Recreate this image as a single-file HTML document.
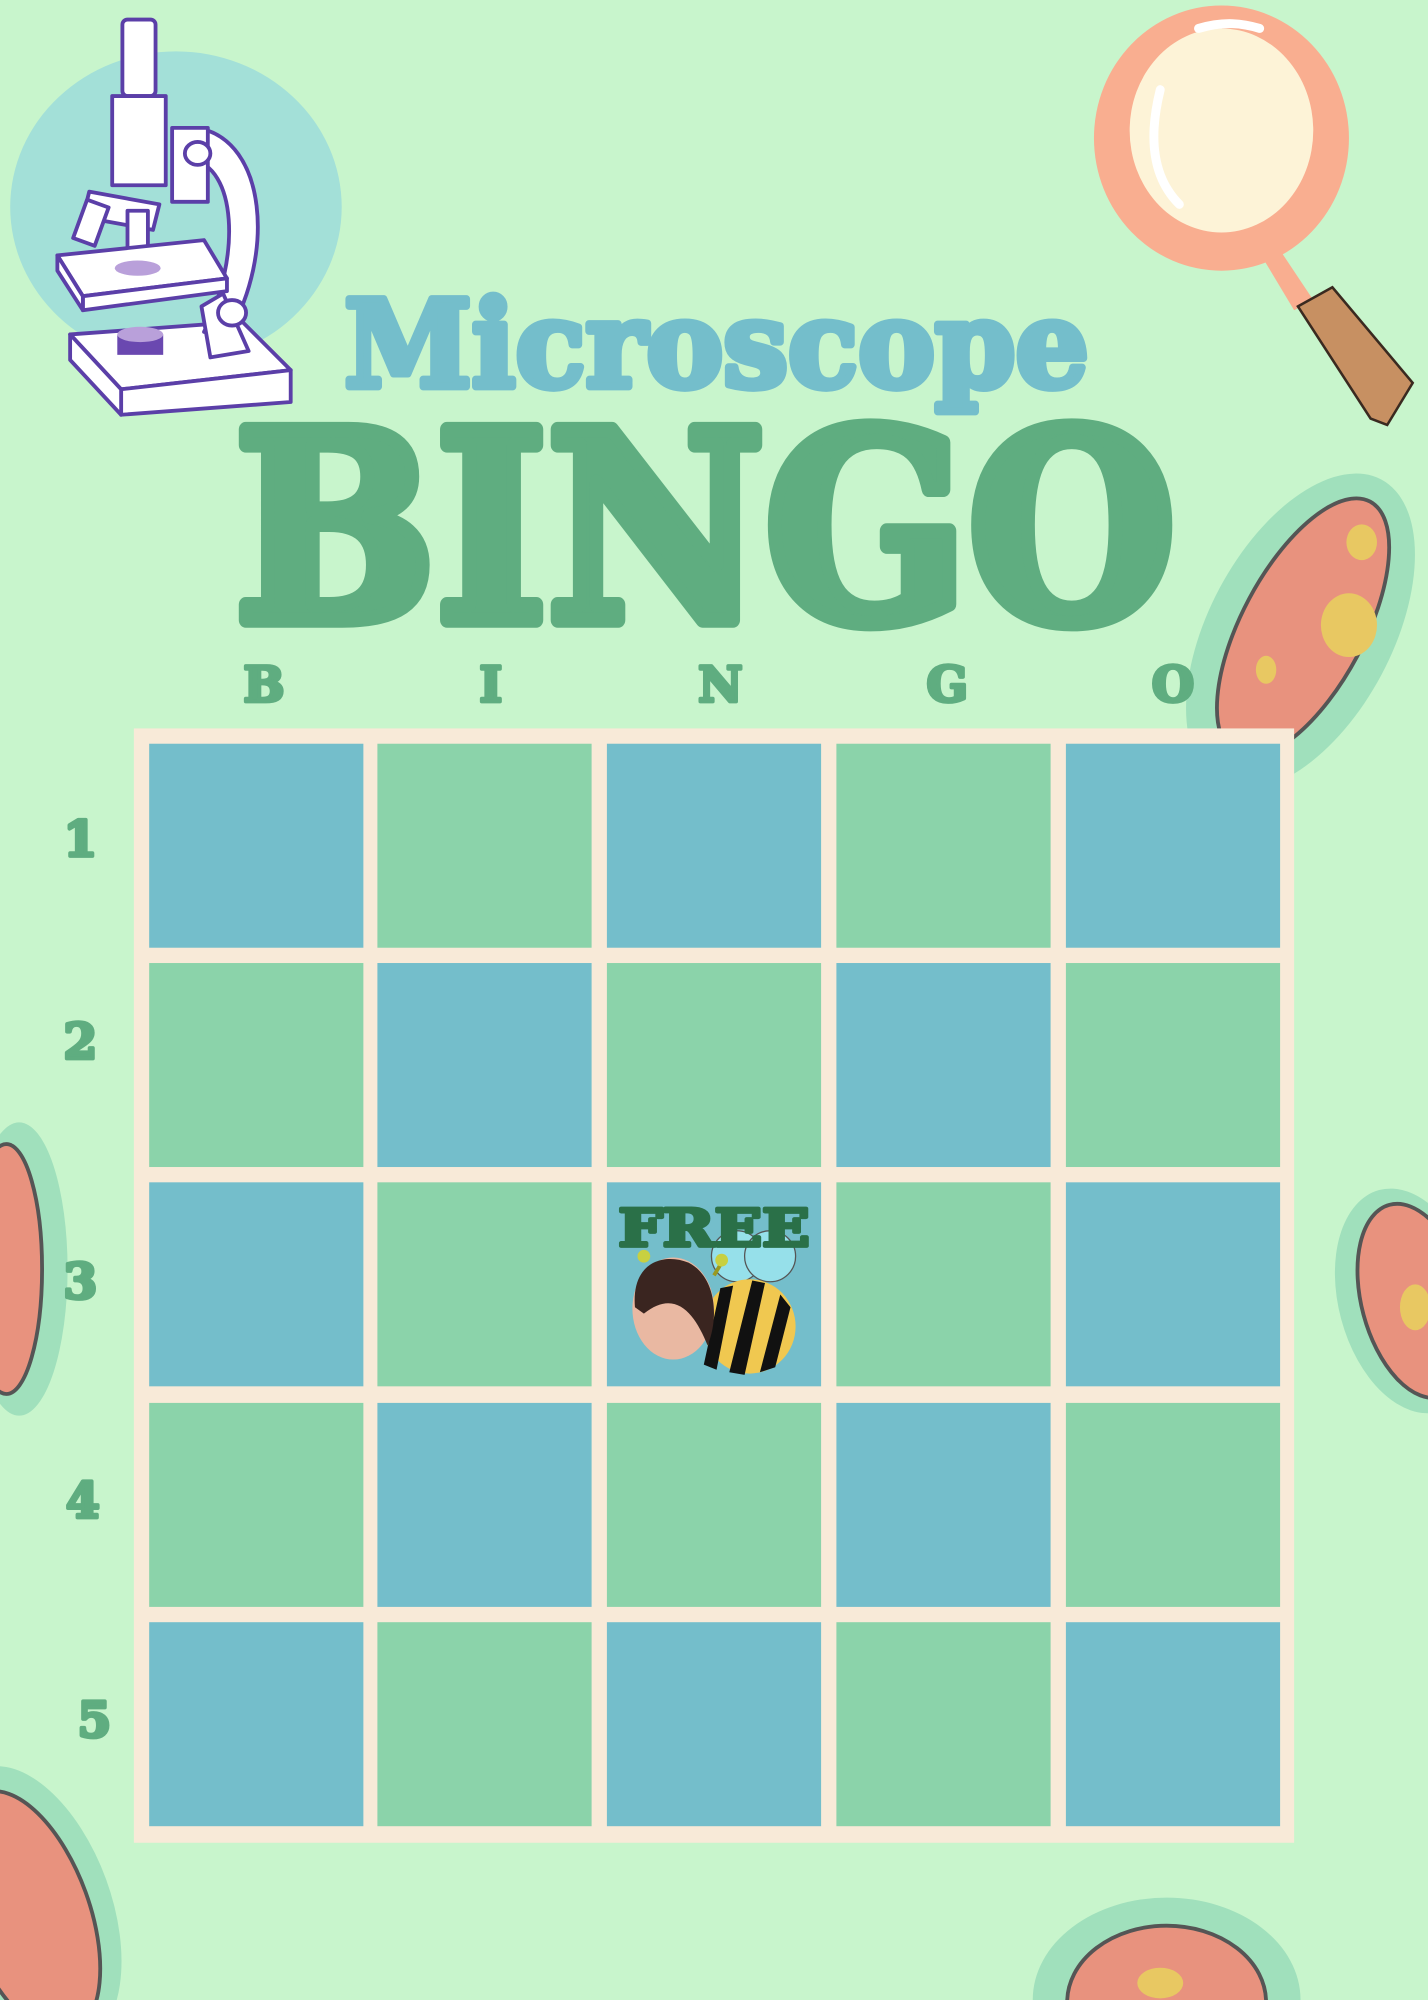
<!DOCTYPE html>
<html><head><meta charset="utf-8"><style>
html,body{margin:0;padding:0;background:#C8F5CC;width:1428px;height:2000px;overflow:hidden}
svg{display:block}
text{font-family:"DejaVu Serif","Liberation Serif",serif;font-weight:bold;stroke-linejoin:round}
</style></head><body>
<svg width="1428" height="2000" viewBox="0 0 1120 1568" xmlns="http://www.w3.org/2000/svg">
<rect width="1120" height="1568" fill="#C8F5CC"/>
<ellipse cx="138" cy="162" rx="130" ry="122" fill="#A3E0D8"/>
<g stroke="#5B3FA8" stroke-width="3" fill="#fff" stroke-linejoin="round">
<path d="M55 262 L190 252 L228 290 L95 305 Z"/><path d="M95 305 L228 290 L228 315 L95 325 Z"/><path d="M55 262 L95 305 L95 325 L55 282 Z"/>
<path d="M155 100 C210 110 215 200 180 260 L160 260 C190 200 185 130 150 125 Z"/>
<rect x="135" y="100" width="28" height="58"/>
<path d="M158 240 L175 230 L195 275 L165 280 Z"/>
<rect x="96" y="15" width="26" height="60" rx="4"/>
<rect x="88" y="75" width="42" height="70"/>
<path d="M70 150 L125 160 L120 180 L65 170 Z"/>
<rect x="62" y="158" width="18" height="32" transform="rotate(20 70 175)"/>
<rect x="100" y="165" width="16" height="30"/>
<path d="M45 200 L160 188 L178 218 L65 232 Z"/><path d="M65 232 L178 218 L178 228 L65 243 Z"/><path d="M45 200 L65 232 L65 243 L45 212 Z"/>
<ellipse cx="155" cy="120" rx="10" ry="9"/><ellipse cx="182" cy="245" rx="11" ry="10"/>
</g>
<ellipse cx="108" cy="210" rx="18" ry="6" fill="#B9A0DA"/>
<rect x="92" y="262" width="36" height="16" fill="#6A48B0"/><ellipse cx="110" cy="262" rx="18" ry="6" fill="#B9A0DA"/>
<path d="M1000 190 L1030 235 L1015 243 L988 198 Z" fill="#F9AE90"/>
<path d="M1018 240 L1045 225 L1108 300 L1088 333 L1075 328 Z" fill="#C79062" stroke="#3a2a20" stroke-width="2"/>
<ellipse cx="958" cy="108" rx="100" ry="104" fill="#F9AE90"/>
<ellipse cx="958" cy="102" rx="72" ry="80" fill="#FDF3D7"/>
<path d="M910 70 C900 110 905 140 925 160" stroke="#fff" stroke-width="7" fill="none" stroke-linecap="round"/>
<path d="M940 22 C960 16 975 18 988 22" stroke="#fff" stroke-width="7" fill="none" stroke-linecap="round"/>
<g>
<ellipse cx="1020" cy="495" rx="135" ry="72" transform="rotate(-62 1020 495)" fill="#A0E0BC"/>
<ellipse cx="1022" cy="492" rx="112" ry="48" transform="rotate(-62 1022 492)" fill="#E8927E" stroke="#555" stroke-width="3"/>
<ellipse cx="1058" cy="490" rx="22" ry="25" fill="#E8C862"/><ellipse cx="1068" cy="425" rx="12" ry="14" fill="#E8C862"/><ellipse cx="993" cy="525" rx="8" ry="11" fill="#E8C862"/>
<ellipse cx="15" cy="995" rx="38" ry="115" fill="#A0E0BC"/><ellipse cx="5" cy="995" rx="28" ry="98" fill="#E8927E" stroke="#555" stroke-width="3"/>
<ellipse cx="1105" cy="1020" rx="55" ry="90" transform="rotate(-15 1105 1020)" fill="#A0E0BC"/><ellipse cx="1110" cy="1020" rx="42" ry="78" transform="rotate(-15 1110 1020)" fill="#E8927E" stroke="#555" stroke-width="3"/>
<ellipse cx="1110" cy="1025" rx="12" ry="18" fill="#E8C862"/>
<ellipse cx="25" cy="1495" rx="62" ry="115" transform="rotate(-20 25 1495)" fill="#A0E0BC"/><ellipse cx="22" cy="1500" rx="48" ry="100" transform="rotate(-20 22 1500)" fill="#E8927E" stroke="#555" stroke-width="3"/>
<ellipse cx="915" cy="1568" rx="105" ry="80" fill="#A0E0BC"/><ellipse cx="915" cy="1570" rx="78" ry="60" fill="#E8927E" stroke="#555" stroke-width="3"/>
<ellipse cx="910" cy="1555" rx="18" ry="12" fill="#E8C862"/>
</g>
<text x="270" y="303" font-size="94" fill="#74BECB" stroke="#74BECB" stroke-width="6" textLength="584" lengthAdjust="spacingAndGlyphs">Microscope</text>
<text x="184" y="486" font-size="205" fill="#5FAD80" stroke="#5FAD80" stroke-width="12" textLength="738" lengthAdjust="spacingAndGlyphs">BINGO</text>
<g font-size="38" fill="#5FAD80" stroke="#5FAD80" stroke-width="3" text-anchor="middle">
<text x="207" y="550">B</text><text x="385" y="550">I</text><text x="565" y="550">N</text><text x="743" y="550">G</text><text x="920" y="550">O</text>
<text x="63" y="671">1</text><text x="63" y="830">2</text><text x="63" y="1018">3</text><text x="65" y="1190">4</text><text x="74" y="1362">5</text>
</g>
<rect x="105" y="571" width="910" height="874" fill="#F8EAD8"/>
<g>
<rect x="117" y="583" width="168" height="160" fill="#74BECB"/><rect x="296" y="583" width="168" height="160" fill="#8BD3AA"/><rect x="476" y="583" width="168" height="160" fill="#74BECB"/><rect x="656" y="583" width="168" height="160" fill="#8BD3AA"/><rect x="836" y="583" width="168" height="160" fill="#74BECB"/>
<rect x="117" y="755" width="168" height="160" fill="#8BD3AA"/><rect x="296" y="755" width="168" height="160" fill="#74BECB"/><rect x="476" y="755" width="168" height="160" fill="#8BD3AA"/><rect x="656" y="755" width="168" height="160" fill="#74BECB"/><rect x="836" y="755" width="168" height="160" fill="#8BD3AA"/>
<rect x="117" y="927" width="168" height="160" fill="#74BECB"/><rect x="296" y="927" width="168" height="160" fill="#8BD3AA"/><rect x="476" y="927" width="168" height="160" fill="#74BECB"/><rect x="656" y="927" width="168" height="160" fill="#8BD3AA"/><rect x="836" y="927" width="168" height="160" fill="#74BECB"/>
<rect x="117" y="1100" width="168" height="160" fill="#8BD3AA"/><rect x="296" y="1100" width="168" height="160" fill="#74BECB"/><rect x="476" y="1100" width="168" height="160" fill="#8BD3AA"/><rect x="656" y="1100" width="168" height="160" fill="#74BECB"/><rect x="836" y="1100" width="168" height="160" fill="#8BD3AA"/>
<rect x="117" y="1272" width="168" height="160" fill="#74BECB"/><rect x="296" y="1272" width="168" height="160" fill="#8BD3AA"/><rect x="476" y="1272" width="168" height="160" fill="#74BECB"/><rect x="656" y="1272" width="168" height="160" fill="#8BD3AA"/><rect x="836" y="1272" width="168" height="160" fill="#74BECB"/>
</g>
<circle cx="578" cy="985" r="20" fill="#96E0EA" stroke="#555" stroke-width="1"/><circle cx="604" cy="985" r="20" fill="#96E0EA" stroke="#555" stroke-width="1"/>
<text x="485" y="977" font-size="40" fill="#2A7048" stroke="#2A7048" stroke-width="3" textLength="150" lengthAdjust="spacingAndGlyphs">FREE</text>
<line x1="560" y1="1000" x2="566" y2="990" stroke="#9A9A20" stroke-width="3"/><circle cx="566" cy="988" r="5" fill="#C8D040"/><circle cx="505" cy="985" r="5" fill="#C8D040"/>
<ellipse cx="588" cy="1040" rx="36" ry="37" fill="#F0C850"/>
<path d="M565 1010 L552 1070 L562 1074 L575 1008 Z M590 1004 L572 1076 L584 1078 L600 1006 Z M612 1015 L596 1076 L608 1072 L620 1025 Z" fill="#111"/>
<ellipse cx="528" cy="1026" rx="32" ry="40" fill="#E9B8A2"/>
<path d="M498 1025 C495 990 520 982 540 990 C560 1000 565 1030 555 1055 C545 1030 530 1010 505 1030 Z" fill="#3a2520"/>
</svg>
</body></html>
